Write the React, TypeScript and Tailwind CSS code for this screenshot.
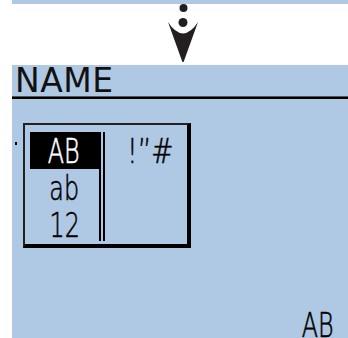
export default function App() {
  const lcd = { fontFamily: '"DejaVu Sans", "Liberation Sans", sans-serif' };

  return (
    <div className="w-[348px] h-[338px] bg-white overflow-hidden flex flex-col text-black" style={lcd}>
      {/* top strip */}
      <div className="ml-3 h-1 shrink-0 bg-[#afc8e4]" />

      {/* arrow */}
      <div className="h-[61px] shrink-0 pl-[165px]">
        <svg width="36" height="61" viewBox="0 0 36 61">
          <circle cx="18.5" cy="4" r="4" fill="#231f20" />
          <circle cx="18" cy="18.5" r="4.5" fill="#231f20" />
          <path d="M3 18 Q10 29 18 29.5 Q26 29 33 18 L18.6 58 L17.4 58 Z" fill="#231f20" />
        </svg>
      </div>

      {/* screen */}
      <div className="ml-3 flex-1 bg-[#afc8e4] flex flex-col">
        <div className="h-[31px] pl-[3px] text-[33px] leading-[31px] tracking-[0.5px] text-[#111]">NAME</div>
        <div className="h-[3px] border-t border-[#555] bg-black" />

        <div className="flex items-start pl-[3px] pt-[24px]">
          <div className="mt-[19px] w-[2px] h-[3px] bg-black" />
          <div className="ml-[6px] w-[168px] h-[125px] border-t-2 border-l-2 border-r-4 border-b-4 border-t-[#222] border-l-[#222] border-r-black border-b-black flex pt-[7px]">
            <div className="w-[79px] flex flex-col items-center pl-[4px] text-[34px] font-extralight leading-none [-webkit-text-stroke:0.6px]">
              <div className="w-[69px] h-[37px] bg-black text-white flex items-center justify-center">
                <span className="inline-block scale-x-[0.7]">AB</span>
              </div>
              <div className="h-[37px] flex items-center justify-center">
                <span className="inline-block scale-x-[0.7]">ab</span>
              </div>
              <div className="h-[37px] flex items-center justify-center">
                <span className="inline-block scale-x-[0.7]">12</span>
              </div>
            </div>
            <div className="flex gap-[2px] h-[109px]">
              <div className="w-[2px] bg-black" />
              <div className="w-[2px] bg-black" />
            </div>
            <div className="pl-[22px] h-[37px] flex items-center text-[34px] font-extralight leading-none [-webkit-text-stroke:0.6px]">
              <span className="inline-block scale-x-[0.78] origin-left">!”#</span>
            </div>
          </div>
        </div>

        <div className="flex-1 flex items-end justify-end pr-[14px]">
          <div className="h-[25px] text-[34px] font-extralight leading-[25px] [-webkit-text-stroke:0.6px]">
            <span className="inline-block scale-x-[0.7] origin-right">AB</span>
          </div>
        </div>
      </div>
    </div>
  );
}
